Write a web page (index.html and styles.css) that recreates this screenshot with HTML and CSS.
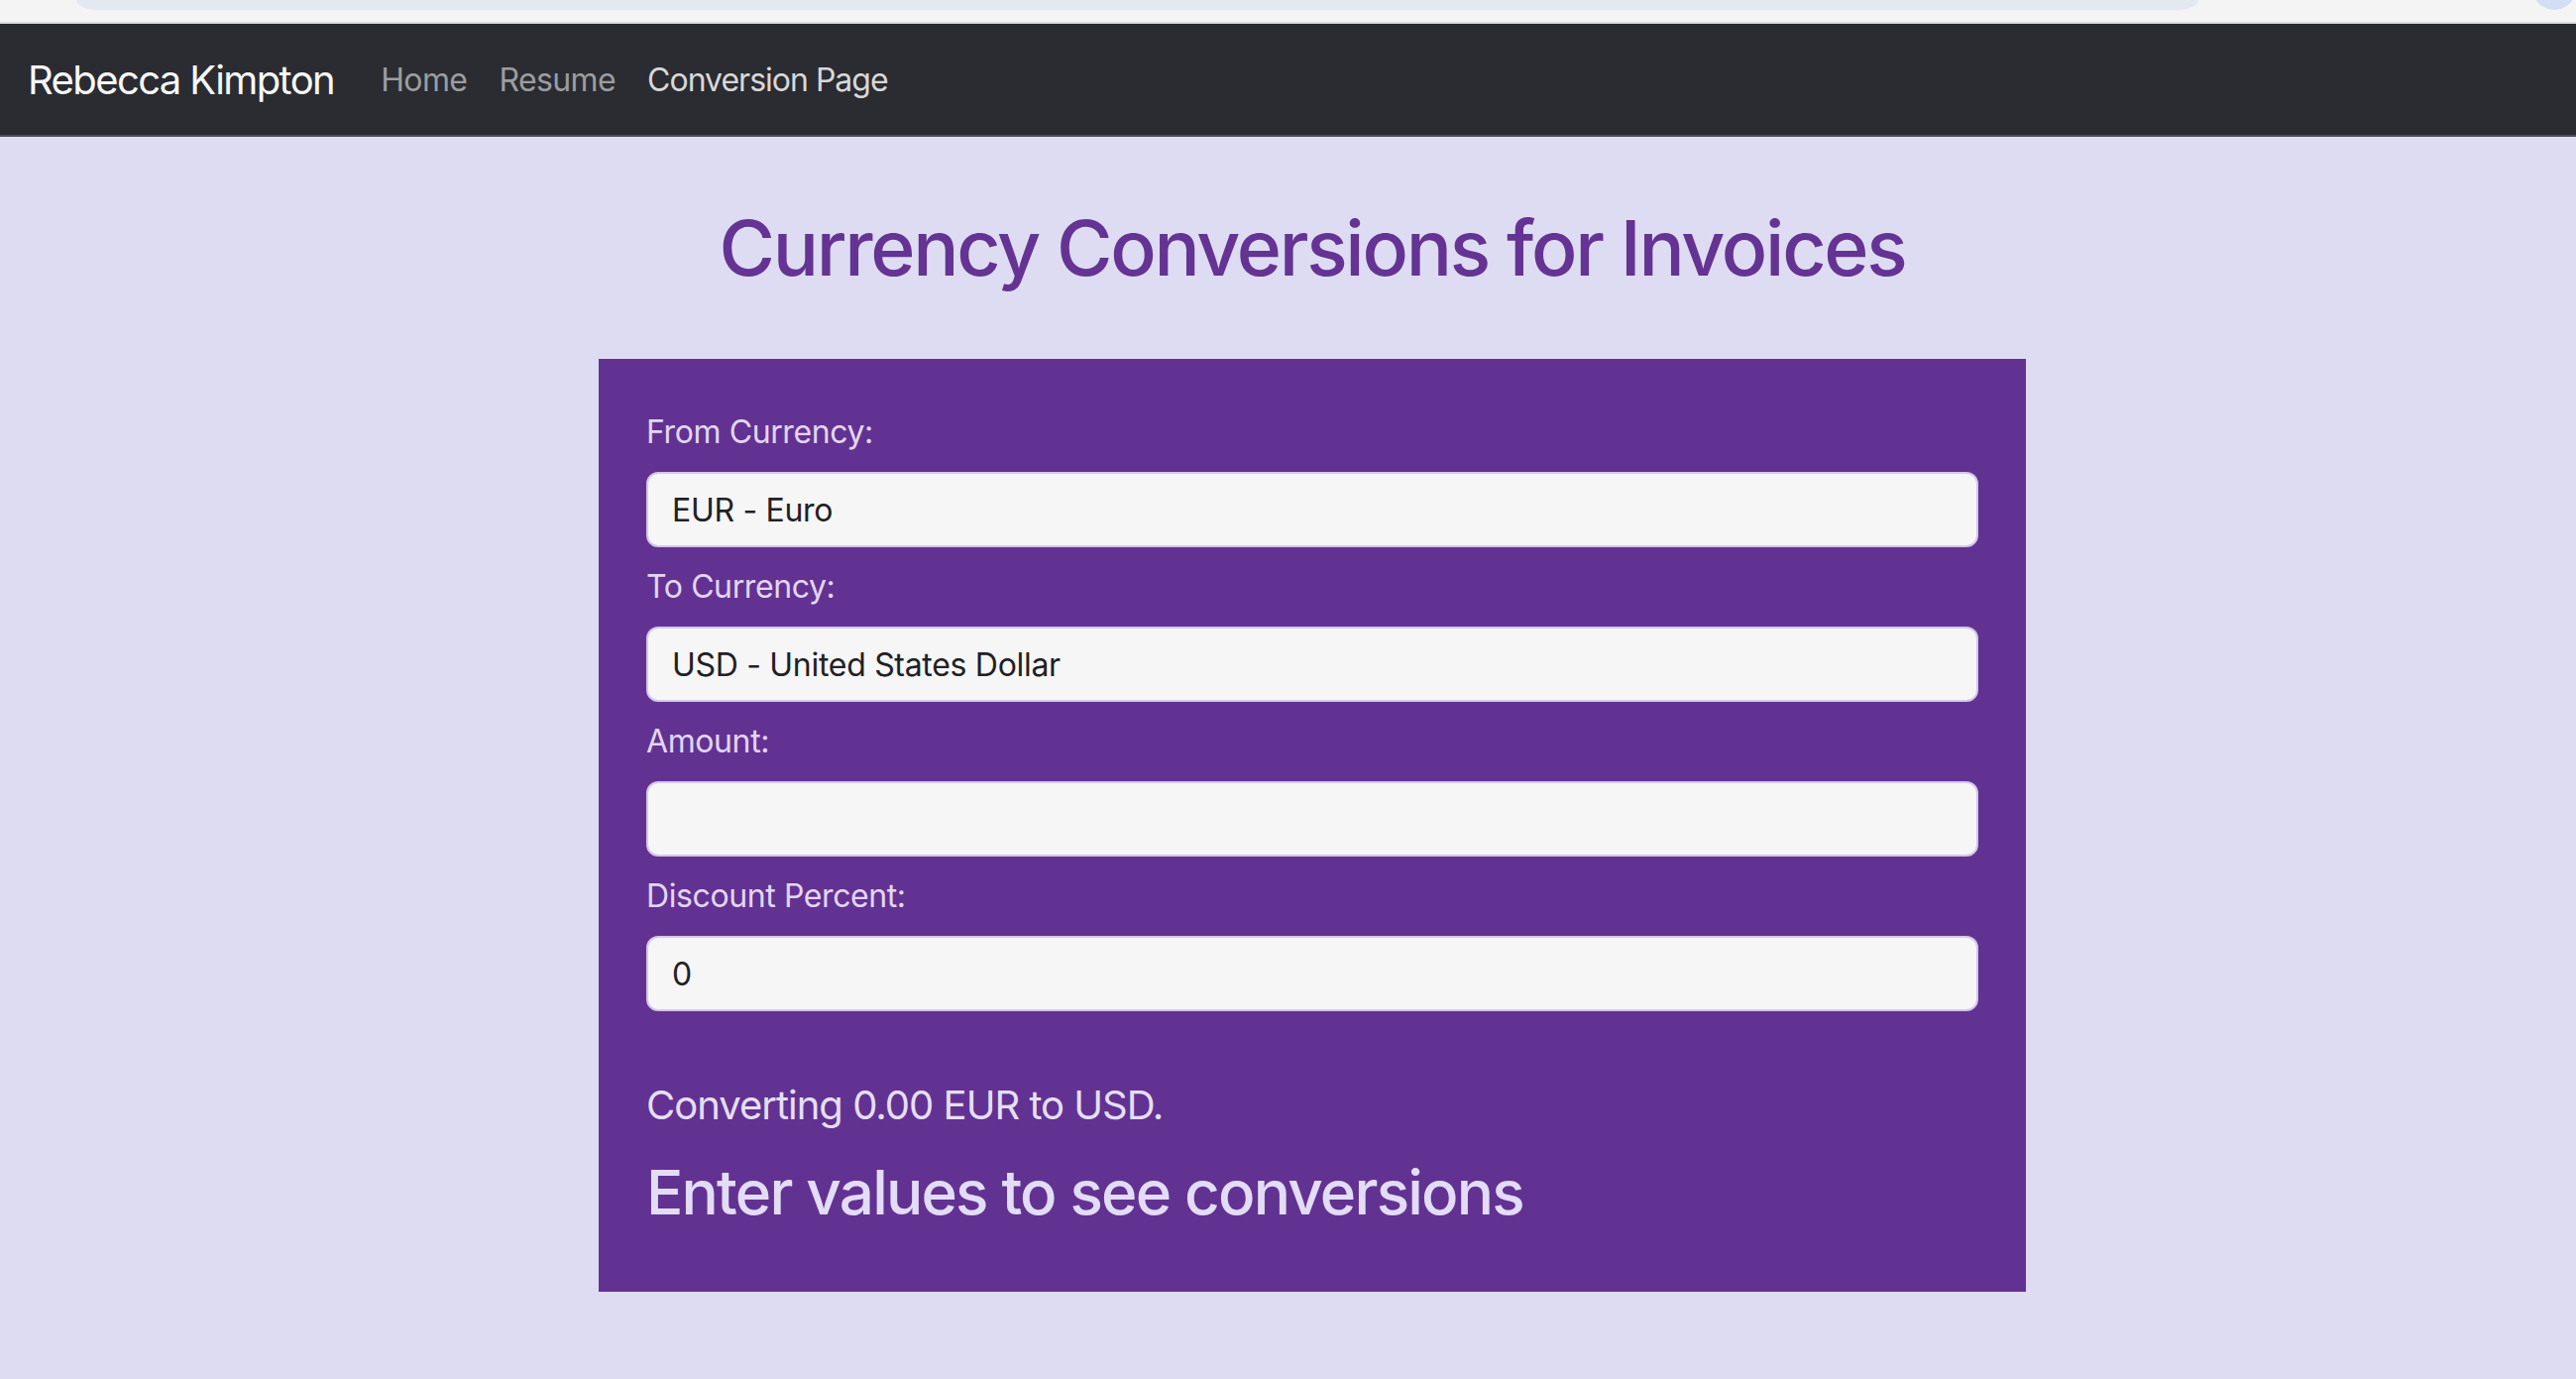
FILE: index.html
```html
<!DOCTYPE html>
<html lang="en">
<head>
<meta charset="utf-8">
<title>Currency Conversions for Invoices</title>
<link rel="stylesheet" href="styles.css">
</head>
<body>
  <div class="chrome">
    <div class="chrome-bar"></div>
    <div class="chrome-dot"></div>
  </div>
  <nav class="navbar">
    <a class="brand" href="#">Rebecca Kimpton</a>
    <ul class="nav-links">
      <li><a class="nav-link" href="#">Home</a></li>
      <li><a class="nav-link" href="#">Resume</a></li>
      <li><a class="nav-link active" href="#">Conversion Page</a></li>
    </ul>
  </nav>
  <main class="container">
    <h1 class="title">Currency Conversions for Invoices</h1>
    <section class="card">
      <div class="field">
        <label class="label">From Currency:</label>
        <div class="control">EUR - Euro</div>
      </div>
      <div class="field">
        <label class="label">To Currency:</label>
        <div class="control">USD - United States Dollar</div>
      </div>
      <div class="field">
        <label class="label">Amount:</label>
        <div class="control"></div>
      </div>
      <div class="field">
        <label class="label">Discount Percent:</label>
        <div class="control">0</div>
      </div>
      <h5 class="converting">Converting 0.00 EUR to USD.</h5>
      <h2 class="result">Enter values to see conversions</h2>
    </section>
  </main>
</body>
</html>
```

FILE: styles.css
```css
* { box-sizing: border-box; }

html, body {
  margin: 0;
  padding: 0;
}

body {
  background: #dedcf3;
  font-family: Inter, "Noto Sans", "Liberation Sans", sans-serif;
  color: #212529;
  min-height: 1391px;
  overflow: hidden;
}

/* browser chrome remnant */
.chrome {
  height: 24px;
  background: #f4f4f5;
  border-bottom: 2px solid #dcdcdf;
  display: flex;
  align-items: flex-start;
  padding-left: 77px;
  overflow: hidden;
}

.chrome-bar {
  width: 2156px;
  height: 10px;
  background: #e3e8f1;
  border-radius: 0 0 22px 22px / 0 0 10px 10px;
}

.chrome-dot {
  width: 44px;
  height: 44px;
  margin-top: -34px;
  margin-left: 337px;
  border-radius: 50%;
  background: #d3ddf4;
  flex: none;
}

/* navbar */
.navbar {
  height: 114px;
  background: #2a2c31;
  border-bottom: 2px solid #4b4b59;
  display: flex;
  align-items: center;
  padding-left: 28px;
}

.brand {
  color: #f8f8f8;
  font-size: 40px;
  text-decoration: none;
  margin-right: 31px;
  letter-spacing: -1.6px;
}

.nav-links {
  list-style: none;
  margin: 0;
  padding: 0;
  display: flex;
}

.nav-link {
  display: block;
  padding: 16px 16px;
  font-size: 32px;
  color: #9c9da0;
  text-decoration: none;
  letter-spacing: -0.6px;
}

.nav-link.active {
  color: #d8d8da;
  letter-spacing: -1px;
}

/* main */
.container {
  width: 1440px;
  margin-left: 604px;
}

.title {
  margin: 0;
  padding: 64px 0 64px;
  text-align: center;
  font-size: 77px;
  line-height: 96px;
  font-weight: 500;
  color: #653393;
  letter-spacing: -2.3px;
}

.card {
  background: #623292;
  padding: 50px 48px 46px;
  height: 941px;
}

.field {
  display: flex;
  flex-direction: column;
  margin-bottom: 16px;
}

.label {
  font-size: 32px;
  line-height: 48px;
  color: #e4d6f5;
  margin-bottom: 16px;
  letter-spacing: -0.4px;
}

.control {
  height: 76px;
  background: #f6f6f6;
  border: 2px solid #d5c6ec;
  border-radius: 12px;
  padding: 0 24px;
  font-size: 32px;
  line-height: 73px;
  color: #1f2125;
  letter-spacing: -0.3px;
}

.converting {
  margin: 71px 0 25px;
  font-size: 40px;
  line-height: 48px;
  font-weight: 400;
  color: #e6dff7;
  letter-spacing: -1px;
}

.result {
  margin: 0;
  font-size: 62px;
  line-height: 77px;
  font-weight: 500;
  color: #e3dcf6;
  letter-spacing: -1.8px;
}
```
